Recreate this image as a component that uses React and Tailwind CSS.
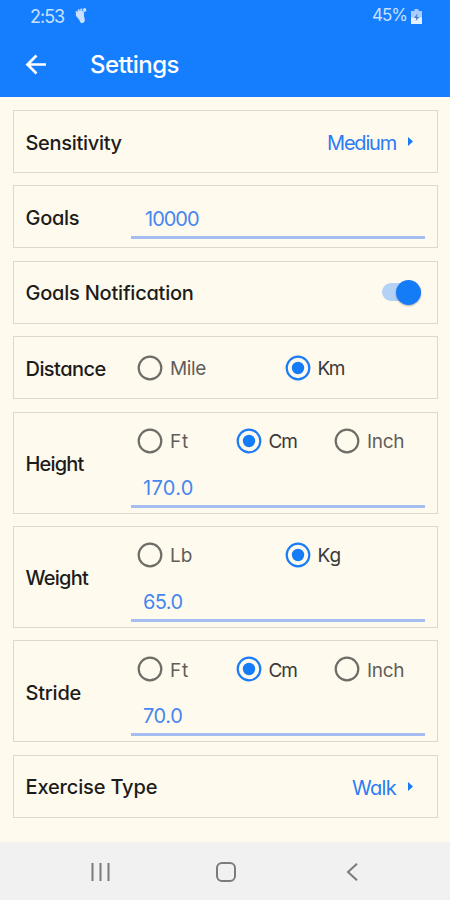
import clsx from 'clsx';

function Card({ label, tracking, tall, children }) {
  return (
    <section
      className={clsx(
        'flex shrink-0 border border-[#dcdad0] pl-[11.5px]',
        tall ? 'h-[102px] pt-[1px]' : 'h-[63px]'
      )}
    >
      <h2 className={clsx('flex w-[105.5px] shrink-0 items-center pt-[2px] text-[20px] font-medium whitespace-nowrap text-[#1c1c1a]', tracking)}>
        {label}
      </h2>
      <div className="min-w-0 flex-1">{children}</div>
    </section>
  );
}

function Picker({ value, tracking }) {
  return (
    <div className="flex h-full items-center justify-end pr-6">
      <span className={clsx('pt-[3px] text-[20px] text-[#2a7cf3]', tracking)}>{value}</span>
      <svg className="ml-[12px] h-[9px] w-[5px]" viewBox="0 0 5 9" fill="#157cf8">
        <path d="M0 0 5 4.5 0 9Z" />
      </svg>
    </div>
  );
}

function Radio({ label, checked, width, tracking }) {
  return (
    <label className={clsx('flex items-center', width)}>
      <svg className="size-[26px] shrink-0" viewBox="0 0 26 26" fill="none">
        <circle cx="13" cy="13" r="11.3" stroke={checked ? '#1b7cf6' : '#6e6c66'} strokeWidth="2.2" />
        {checked && <circle cx="13" cy="13" r="6.2" fill="#157cf8" />}
      </svg>
      <span className={clsx('ml-[7px] pt-[3px] text-[19px] leading-[24px]', tracking, checked ? 'text-[#393939]' : 'text-[#5f5e5a]')}>
        {label}
      </span>
    </label>
  );
}

function Field({ value, className, tracking }) {
  return (
    <div className={clsx('mr-3 flex items-center border-b-[3px] border-[#a5bdf0] text-[20px] text-[#4587ee]', className)}>
      <span className={tracking}>{value}</span>
    </div>
  );
}

function Measure({ label, labelTracking, value, tracking, units }) {
  return (
    <Card label={label} tracking={labelTracking} tall>
      <div className="flex h-[54px] items-center pl-[6px]">
        {units.map((u) => (
          <Radio key={u.label} {...u} />
        ))}
      </div>
      <Field className="h-[40px] pt-[3px] pl-[12px]" value={value} tracking={tracking} />
    </Card>
  );
}

const lengthUnits = [
  { label: 'Ft', width: 'w-[98.5px]', tracking: 'tracking-[0.9px]' },
  { label: 'Cm', width: 'w-[98.5px]', tracking: 'tracking-[-1.2px]', checked: true },
  { label: 'Inch', width: 'w-[98px]', tracking: 'tracking-[-0.3px]' },
];

const weightUnits = [
  { label: 'Lb', width: 'w-[147.5px]', tracking: 'tracking-[0px]' },
  { label: 'Kg', width: 'w-[140px]', tracking: 'tracking-[0px]', checked: true },
];

export default function App() {
  return (
    <div className="flex h-[900px] w-[450px] flex-col overflow-hidden bg-[#fffaee] font-['Inter','Lato',sans-serif] [font-feature-settings:'cv11','ss03']">
      <header className="h-[97px] shrink-0 bg-[#157eff] text-white">
        <div className="flex h-8 items-center justify-between pr-[28px] pl-[30px] text-[#c9e0ff]">
          <div className="flex items-center">
            <span className="text-[18px] tracking-[-1px]">2:53</span>
            <svg className="ml-[11px] h-[16px] w-[12px]" viewBox="0 0 12 16" fill="currentColor">
              <path d="M4 3C7 1.800 9.600 3.500 9 6.500c-.5 2.200.7 3 .8 5.500.1 3.600-4.400 4.300-5 1C4.300 10.500.6 9 .8 6.200.9 4.500 2 3.700 4 3Z" />
              <ellipse cx="9.600" cy="2" rx="1.700" ry="2" />
              <circle cx="6.300" cy="1.700" r="1.100" />
              <circle cx="3.700" cy="2.300" r="1" />
              <circle cx="1.500" cy="4" r=".9" />
            </svg>
          </div>
          <div className="flex items-center">
            <span className="text-[17px] tracking-[-1px]">45%</span>
            <svg className="ml-[4px] h-[15px] w-[11px]" viewBox="0 0 11 15">
              <path d="M3.500 0h4v2H11v13H0V2h3.500Z" fill="#a9cdff" />
              <path d="M0 8.500h11V15H0Z" fill="#e5f0ff" />
              <path d="M6.500 4.500 3 9h2.300l-.6 3L8.500 8H6Z" fill="#4c7fc4" />
            </svg>
          </div>
        </div>
        <div className="flex h-[65px] items-center pl-[25px]">
          <svg className="size-[22px]" viewBox="0 0 22 22" fill="none" stroke="currentColor" strokeWidth="2.700">
            <path d="M21 10.500H3M11.500 1.500l-9 9 9 9" />
          </svg>
          <h1 className="ml-[43px] pt-[1px] text-[24px] font-medium tracking-[-0.6px]">Settings</h1>
        </div>
      </header>

      <main className="flex h-[745px] shrink-0 flex-col gap-[12.4px] pt-[13px] pr-3 pl-[13px]">
        <Card label="Sensitivity" tracking="tracking-[-0.3px]">
          <Picker value="Medium" tracking="tracking-[-1.2px]" />
        </Card>
        <Card label="Goals" tracking="tracking-[-0.3px]">
          <Field className="h-[53px] pt-[15px] pl-[14px]" value="10000" tracking="tracking-[-1px]" />
        </Card>
        <Card label="Goals Notification" tracking="tracking-[-0.22px]">
          <div className="flex h-full items-center justify-end pr-[16px]">
            <div className="flex h-[18px] w-[39px] items-center justify-end rounded-full bg-[#b3d2f5]">
              <span className="size-[25px] shrink-0 rounded-full bg-[#157cf8] shadow-[0_1px_2px_rgba(0,0,0,0.3)]" />
            </div>
          </div>
        </Card>
        <Card label="Distance" tracking="tracking-[-0.55px]">
          <div className="flex h-full items-center pl-[6px]">
            <Radio label="Mile" width="w-[147.5px]" tracking="tracking-[-0.4px]" />
            <Radio label="Km" width="w-[140px]" tracking="tracking-[-1.4px]" checked />
          </div>
        </Card>
        <Measure label="Height" labelTracking="tracking-[-0.8px]" value="170.0" tracking="tracking-[0.3px]" units={lengthUnits} />
        <Measure label="Weight" labelTracking="tracking-[-0.75px]" value="65.0" tracking="tracking-[-0.6px]" units={weightUnits} />
        <Measure label="Stride" labelTracking="tracking-[-0.2px]" value="70.0" tracking="tracking-[-0.4px]" units={lengthUnits} />
        <Card label="Exercise Type" tracking="tracking-[-0.15px]">
          <Picker value="Walk" tracking="tracking-[-0.7px]" />
        </Card>
      </main>

      <nav className="flex h-[58px] shrink-0 items-center bg-[#f1f1f1] pt-px pl-[90.5px] text-[#7b7b7b]">
        <svg className="h-[18px] w-[19px]" viewBox="0 0 19 18" stroke="currentColor" strokeWidth="2">
          <path d="M1.500 0v18M9.500 0v18M17.500 0v18" />
        </svg>
        <svg className="ml-[106.5px] size-[20px]" viewBox="0 0 20 20" fill="none" stroke="currentColor" strokeWidth="2">
          <rect x="1" y="1" width="18" height="18" rx="5" />
        </svg>
        <svg className="ml-[110px] h-[18px] w-[12px]" viewBox="0 0 12 18" fill="none" stroke="currentColor" strokeWidth="2">
          <path d="M11 .7 2 9l9 8.300" />
        </svg>
      </nav>
    </div>
  );
}
